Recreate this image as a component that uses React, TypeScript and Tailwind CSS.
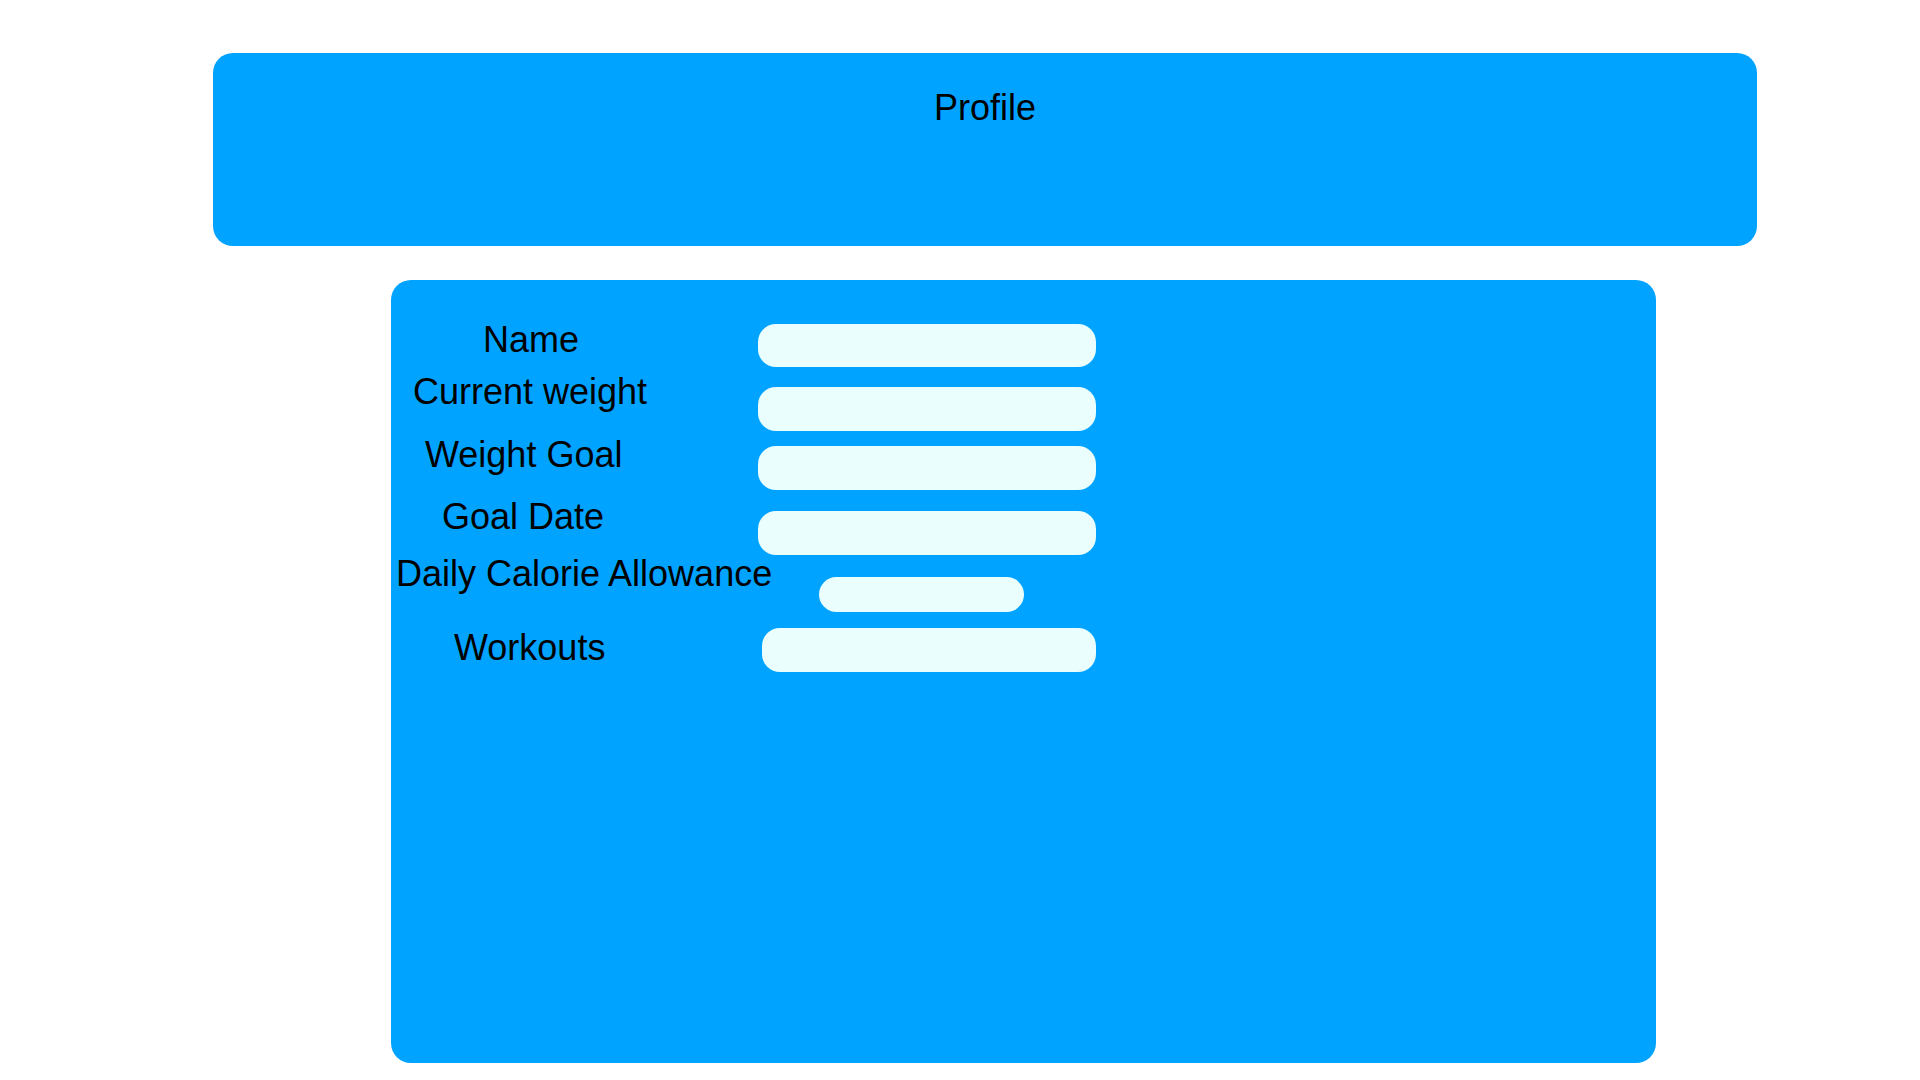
const labels = [
  { text: 'Name', cls: 'ml-[92px]' },
  { text: 'Current weight', cls: 'ml-[22px] mt-[12px]' },
  { text: 'Weight Goal', cls: 'ml-[34px] mt-[23px]' },
  { text: 'Goal Date', cls: 'ml-[51px] mt-[22px]' },
  { text: 'Daily Calorie Allowance', cls: 'ml-[5px] mt-[17px]' },
  { text: 'Workouts', cls: 'ml-[63px] mt-[34px]' },
]

const boxes = [
  'w-[338px] h-[43px]',
  'w-[338px] h-[44px] mt-[20px]',
  'w-[338px] h-[44px] mt-[15px]',
  'w-[338px] h-[44px] mt-[21px]',
  'w-[205px] h-[35px] mt-[22px] ml-[61px]',
  'w-[334px] h-[44px] mt-[16px] ml-[4px]',
]

export default function App() {
  return (
    <div className="min-h-screen w-full bg-white pt-[53px] text-black [font-family:'Liberation_Sans',Arial,sans-serif]">
      <div className="ml-[213px] h-[193px] w-[1544px] rounded-[20px] bg-[#00a3ff] pt-[35px] text-center">
        <h1 className="text-[36px] leading-[40px]">Profile</h1>
      </div>

      <div className="ml-[391px] mt-[34px] flex h-[783px] w-[1265px] items-start rounded-[20px] bg-[#00a3ff]">
        <div className="flex w-[367px] shrink-0 flex-col items-start pt-[40px]">
          {labels.map((l) => (
            <label key={l.text} className={`block h-[40px] whitespace-nowrap text-[36px] leading-[40px] ${l.cls}`}>
              {l.text}
            </label>
          ))}
        </div>
        <div className="flex flex-col items-start pt-[44px]">
          {boxes.map((b, i) => (
            <div key={i} className={`rounded-[18px] bg-[#ebfefe] ${b}`} />
          ))}
        </div>
      </div>
    </div>
  )
}
